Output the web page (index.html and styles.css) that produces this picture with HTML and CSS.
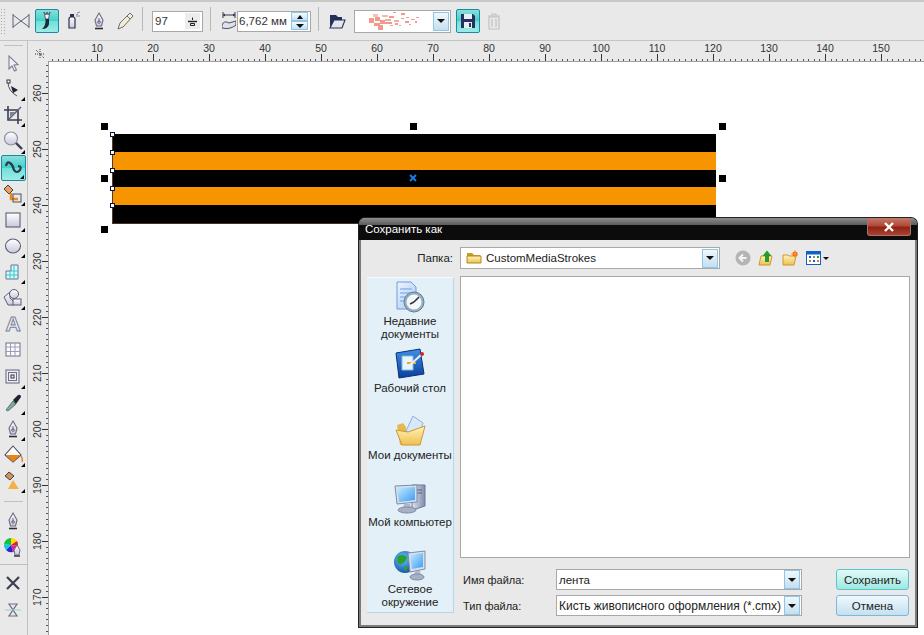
FILE: index.html
```html
<!DOCTYPE html>
<html lang="ru">
<head>
    <meta charset="UTF-8">
    <title>Сохранить как</title>
    <link rel="stylesheet" href="styles.css">
</head>
<body>
    <svg class="defs" width="0" height="0">
        <defs>
            <linearGradient id="glass" x1="0" y1="0" x2="0" y2="1"><stop offset="0" stop-color="#ffffff"/><stop offset="1" stop-color="#c8c8dc"/></linearGradient>
            <linearGradient id="folder" x1="0" y1="0" x2="0" y2="1"><stop offset="0" stop-color="#fff3b8"/><stop offset="1" stop-color="#f0c050"/></linearGradient>
            <linearGradient id="screen" x1="0" y1="0" x2="1" y2="1"><stop offset="0" stop-color="#c4ecff"/><stop offset="1" stop-color="#3c9cf0"/></linearGradient>
            <linearGradient id="case" x1="0" y1="0" x2="1" y2="0"><stop offset="0" stop-color="#dde4f0"/><stop offset="1" stop-color="#7f8ba8"/></linearGradient>
            <linearGradient id="desk" x1="0" y1="0" x2="0" y2="1"><stop offset="0" stop-color="#3f8fe8"/><stop offset="1" stop-color="#0a3f9c"/></linearGradient>
            <linearGradient id="page" x1="0" y1="0" x2="1" y2="1"><stop offset="0" stop-color="#eef5ff"/><stop offset="1" stop-color="#a8c8f4"/></linearGradient>
            <radialGradient id="globe" cx=".4" cy=".35" r=".7"><stop offset="0" stop-color="#6cc4f8"/><stop offset="1" stop-color="#0c4fa8"/></radialGradient>
            <symbol id="nib" viewBox="0 0 20 20">
                <path d="M10 2 L14 9 L12.5 15 H7.5 L6 9 Z" fill="url(#glass)" stroke="#6a6b82" stroke-width="1.1"/>
                <path d="M10 7 V11" stroke="#6a6b82"/>
                <circle cx="10" cy="11" r="1.3" fill="none" stroke="#6a6b82"/>
                <path d="M6 17.5 H14" stroke="#2c2c3c" stroke-width="1.6"/>
            </symbol>
            <symbol id="recent" viewBox="0 0 32 32">
                <path d="M3 1 H17 L22 6 V28 H3 Z" fill="url(#page)" stroke="#6f9ade"/>
                <path d="M6 8 H18 M6 12 H16 M6 16 H13 M6 20 H13" stroke="#6c9ce8"/>
                <circle cx="20" cy="21" r="10" fill="#94b0c2" stroke="#64808f"/>
                <circle cx="20" cy="21" r="7.5" fill="#f4f8fa"/>
                <path d="M20 21 L25 16 M20 21 L16 23" stroke="#30343c" stroke-width="1.6"/>
            </symbol>
        </defs>
    </svg>

    <div class="app">
        <header class="toolbar">
            <div class="grip"></div>
            <button class="tb-btn">
                <svg viewBox="0 0 18 18" class="ic18"><path d="M1 2 V16 M17 2 V16 M1 3 L17 15 M1 15 L17 3" fill="none" stroke="#5a6278"/></svg>
            </button>
            <button class="tb-btn active">
                <svg viewBox="0 0 20 20" class="ic20"><path d="M7 1 L8.5 8 H11.5 L13 1 L11 4 L10 1 L9 4 Z" fill="#f4f4f4" stroke="#3c4458" stroke-width=".8"/><path d="M8.5 8 H12 L12 13 Q11 18 5 18 Q9 15 8.5 8 Z" fill="#22283c"/></svg>
            </button>
            <button class="tb-btn">
                <svg viewBox="0 0 20 20" class="ic20"><path d="M6 8 Q6 6 8 6 H10 Q12 6 12 8 V17 H6 Z" fill="url(#glass)" stroke="#2e3148" stroke-width="1.2"/><rect x="7" y="3" width="4" height="3" fill="#2e3148"/><path d="M13 4 L15 3 M13 5 H17 M14 2 L17 1" stroke="#8c8ca8"/></svg>
            </button>
            <button class="tb-btn">
                <svg class="ic20"><use href="#nib"/></svg>
            </button>
            <button class="tb-btn">
                <svg viewBox="0 0 20 20" class="ic20"><path d="M15 2 L18 5 L8 16 L3 18 L5 12 Z" fill="#f2ecd8" stroke="#6c7064"/><path d="M12 5 L15 8" stroke="#6c7064"/></svg>
            </button>
            <div class="tb-sep"></div>
            <div class="field field-num">
                <span class="field-value">97</span>
                <span class="step-btn">
                    <svg viewBox="0 0 15 15" width="15" height="15"><path d="M3 7.5 H12" stroke="#222" stroke-width="1.4"/><path d="M7.5 3.5 V6 M5.5 9.5 H9.5 V11.5 H5.5 Z" fill="none" stroke="#222"/></svg>
                </span>
            </div>
            <div class="tb-sep sep-wide"></div>
            <svg viewBox="0 0 14 22" class="size-ic"><path d="M1 2 V8 M13 2 V8 M1 5 H13" stroke="#30344a"/><path d="M1 5 L3 3.5 V6.5 Z M13 5 L11 3.5 V6.5 Z" fill="#30344a"/><path d="M0 15 Q2 10 7 13 L14 11 V15 Q8 20 0 18 Z" fill="#dfe1e8" stroke="#4a4e60"/></svg>
            <div class="field field-size">
                <span class="field-value">6,762 мм</span>
                <span class="spin">
                    <span class="spin-part"><i class="arrow-up"></i></span>
                    <span class="spin-part"><i class="arrow-down"></i></span>
                </span>
            </div>
            <div class="tb-sep sep-tight"></div>
            <button class="tb-btn btn-folder">
                <svg viewBox="0 0 20 20" class="ic20"><path d="M3 16 V4 H9 L11 6 H15 V9 H8 Z" fill="#27305a"/><path d="M3 17 L7 9 H18 L15 17 Z" fill="#e4e6ee" stroke="#27305a" stroke-width="1.1"/></svg>
            </button>
            <div class="field field-brush">
                <svg viewBox="0 0 52 18" class="splatter">
                    <g fill="#ee8070">
                        <rect x="0" y="6" width="5" height="5"/><rect x="4" y="2" width="5" height="3" opacity=".6"/><rect x="6" y="5" width="5" height="4"/>
                        <rect x="5" y="11" width="6" height="3"/><rect x="9" y="13" width="5" height="5"/><rect x="11" y="8" width="5" height="4"/>
                        <rect x="13" y="3" width="6" height="2" opacity=".7"/><rect x="16" y="7" width="6" height="2" opacity=".8"/><rect x="16" y="10" width="7" height="2"/>
                        <rect x="20" y="4" width="5" height="2"/><rect x="24" y="0" width="3" height="1"/><rect x="25" y="8" width="5" height="2" opacity=".8"/>
                        <rect x="26" y="11" width="3" height="2"/><rect x="32" y="1" width="4" height="2"/><rect x="32" y="6" width="3" height="1"/>
                        <rect x="36" y="9" width="4" height="2"/><rect x="37" y="5" width="3" height="1"/><rect x="42" y="7" width="4" height="1"/>
                        <rect x="40" y="12" width="2" height="1"/><rect x="46" y="9" width="2" height="2"/><rect x="47" y="5" width="3" height="1"/>
                        <rect x="30" y="13" width="2" height="1"/><rect x="21" y="13" width="3" height="1"/>
                    </g>
                </svg>
                <span class="drop-btn"><i class="arrow-down"></i></span>
            </div>
            <button class="tb-btn active btn-save">
                <svg viewBox="0 0 20 20" class="ic20"><path d="M3 3 H15 L17 5 V17 H3 Z" fill="#2a2f62"/><rect x="6" y="3" width="8" height="5" fill="#e8ecf4"/><rect x="6" y="11" width="8" height="6" fill="#e8ecf4"/><rect x="11" y="12" width="2" height="4" fill="#2a2f62"/></svg>
            </button>
            <button class="tb-btn">
                <svg viewBox="0 0 20 20" class="ic20"><path d="M4 5 H16 M8 5 V3 H12 V5" fill="none" stroke="#c2c2c2" stroke-width="1.2"/><path d="M5 6 H15 V18 H5 Z M8 8 V16 M12 8 V16" fill="none" stroke="#c2c2c2" stroke-width="1.2"/></svg>
            </button>
        </header>

        <div class="workspace">
            <nav class="toolbox">
                <div class="box-sep first"></div>
                <div class="tool">
                    <svg viewBox="0 0 20 20" class="ic20"><path d="M6 3 L6 16 L9 13 L11.5 18 L13.5 17 L11 12 L15 11.5 Z" fill="#f0f0f6" stroke="#7a7f98" stroke-width="1.1"/></svg>
                </div>
                <div class="tool more">
                    <svg viewBox="0 0 20 20" class="ic20"><path d="M5 3 Q5 12 14 17" fill="none" stroke="#555"/><rect x="4" y="1" width="3" height="3" fill="#fff" stroke="#333"/><path d="M8 7 L15 11 L10 14 Z" fill="#1c2236"/></svg>
                </div>
                <div class="tool more">
                    <svg viewBox="0 0 20 20" class="ic20"><path d="M5 1 V15 H19 M1 5 H15 V19" fill="none" stroke="#3a3e54" stroke-width="1.6"/><path d="M6 14 L18 2" stroke="#5c6074" stroke-width="1.4"/><path d="M7 7 H12 L7 12 Z" fill="#7c8094"/></svg>
                </div>
                <div class="tool more">
                    <svg viewBox="0 0 20 20" class="ic20"><circle cx="8" cy="7.5" r="6.5" fill="url(#glass)" stroke="#8a8fa4" stroke-width="1.2"/><path d="M13 12 L19 18" stroke="#3a3e50" stroke-width="2.4"/></svg>
                </div>
                <div class="tool more active">
                    <svg viewBox="0 0 20 20" class="ic20"><path d="M2 8 Q3 3 6 5 T10 12 Q13 16 16 12 Q18 8 14 8" fill="none" stroke="#2c3a4e" stroke-width="2.2"/></svg>
                </div>
                <div class="tool more">
                    <svg viewBox="0 0 20 20" class="ic20"><path d="M5 1 L10 6 L6 10 L1 5 Z" fill="#e8a060" stroke="#3c4058"/><path d="M8 9 V15 H15" fill="none" stroke="#f08a10" stroke-width="2.6"/><rect x="10" y="10" width="8" height="8" fill="none" stroke="#4a4e66"/></svg>
                </div>
                <div class="tool more">
                    <svg viewBox="0 0 20 20" class="ic20"><rect x="3" y="3" width="14" height="14" fill="url(#glass)" stroke="#5a5e76" stroke-width="1.1"/></svg>
                </div>
                <div class="tool more">
                    <svg viewBox="0 0 20 20" class="ic20"><ellipse cx="10" cy="10" rx="7.5" ry="7" fill="url(#glass)" stroke="#5a5e76" stroke-width="1.1"/></svg>
                </div>
                <div class="tool more">
                    <svg viewBox="0 0 20 20" class="ic20"><path d="M3 9 H8 V3 H15 V17 H3 Z" fill="#d8fafa" stroke="#6c708c"/><path d="M3 13 H15 M8 9 H15 M7 9 V17 M11 3 V17" stroke="#30c8d0"/></svg>
                </div>
                <div class="tool more">
                    <svg viewBox="0 0 20 20" class="ic20"><path d="M1 9 L7 4 L7 10 L11 14 V17 H5 Z" fill="url(#glass)" stroke="#5a5e76"/><circle cx="11" cy="6" r="4.5" fill="url(#glass)" stroke="#5a5e76"/><rect x="10" y="11" width="8" height="6" fill="url(#glass)" stroke="#5a5e76"/></svg>
                </div>
                <div class="tool"><span class="text-tool">A</span></div>
                <div class="tool">
                    <svg viewBox="0 0 20 20" class="ic20"><rect x="3" y="3" width="14" height="13" fill="#fbfbfd" stroke="#6c708c"/><path d="M3 7 H17 M3 11.5 H17 M7.5 3 V16 M12 3 V16" stroke="#9a9eb4"/></svg>
                </div>
                <div class="tool more">
                    <svg viewBox="0 0 20 20" class="ic20"><rect x="3" y="3" width="13" height="13" fill="#eee" stroke="#6c708c" stroke-width="1.1"/><rect x="5.5" y="5.5" width="8" height="8" fill="none" stroke="#6c708c"/><rect x="8" y="8" width="3" height="3" fill="none" stroke="#30344a"/></svg>
                </div>
                <div class="tool more">
                    <svg viewBox="0 0 20 20" class="ic20"><path d="M3 17 L10 8 L13 11 L5 18 Z" fill="#7fa89c" stroke="#5a7a74"/><path d="M10 7 L15 2 Q18 1 18 4 L13 11 Z" fill="#1f2336"/></svg>
                </div>
                <div class="tool more"><svg class="ic20"><use href="#nib"/></svg></div>
                <div class="tool more">
                    <svg viewBox="0 0 20 20" class="ic20"><path d="M10 1 L18 10 L10 17 L2 10 Z" fill="#fff" stroke="#4a4e66" stroke-width="1.1"/><path d="M3 10 H17 L10 17 Z" fill="#ee8412"/><path d="M18 11 Q20 14 19 17" fill="none" stroke="#ee8412" stroke-width="1.4"/></svg>
                </div>
                <div class="tool more">
                    <svg viewBox="0 0 20 20" class="ic20"><path d="M6 1 L11 5 L7 9 L2 5 Z" fill="#d89050" stroke="#3c4058"/><path d="M10 9 L16 18 H5 Z" fill="#f6b048"/></svg>
                </div>
                <div class="box-sep after-tools"></div>
                <div class="tool"><svg class="ic20"><use href="#nib"/></svg></div>
                <div class="tool">
                    <svg viewBox="0 0 20 20" class="ic20">
                        <path d="M8 8 L8 1 A7 7 0 0 1 14 4 Z" fill="#ffd800"/><path d="M8 8 L14 4 A7 7 0 0 1 15 9 Z" fill="#e02020"/><path d="M8 8 L15 9 A7 7 0 0 1 10 15 Z" fill="#e020a0"/>
                        <path d="M8 8 L10 15 A7 7 0 0 1 3 13 Z" fill="#3020d0"/><path d="M8 8 L3 13 A7 7 0 0 1 1 7 Z" fill="#10c8e0"/><path d="M8 8 L1 7 A7 7 0 0 1 8 1 Z" fill="#10c040"/>
                        <path d="M14 8 L17 13 L16 18 H12 L11 13 Z" fill="url(#glass)" stroke="#6a6b82"/><path d="M11 19 H17" stroke="#2c2c3c" stroke-width="1.4"/>
                    </svg>
                </div>
                <div class="box-sep after-color"></div>
                <div class="tool">
                    <svg viewBox="0 0 20 20" class="ic20"><path d="M4 4 L16 16 M16 4 L4 16" stroke="#3c3f50" stroke-width="2.2"/></svg>
                </div>
                <div class="tool">
                    <svg viewBox="0 0 20 20" class="ic20"><path d="M6 4 H14 L6 16 H14 Z" fill="none" stroke="#6a6e84" stroke-width="1.2"/><path d="M2 10 H18" stroke="#9cd0c4"/></svg>
                </div>
                <div class="box-end"></div>
            </nav>

            <main class="canvas-area">
                <div class="ruler-corner">
                    <svg viewBox="0 0 12 12" width="12" height="12"><path d="M1 6 H11 M6 1 V11 M2 2 L10 10" stroke="#333" stroke-dasharray="1 1"/></svg>
                </div>
                <div class="ruler-h">
                    <span>10</span><span>20</span><span>30</span><span>40</span><span>50</span><span>60</span><span>70</span><span>80</span>
                    <span>90</span><span>100</span><span>110</span><span>120</span><span>130</span><span>140</span><span>150</span>
                </div>
                <div class="ruler-v">
                    <span>260</span><span>250</span><span>240</span><span>230</span><span>220</span>
                    <span>210</span><span>200</span><span>190</span><span>180</span><span>170</span>
                </div>
                <div class="sheet">
                    <div class="ribbon">
                        <div class="stripe black"></div>
                        <div class="stripe orange"></div>
                        <div class="stripe black"></div>
                        <div class="stripe orange"></div>
                        <div class="stripe black"></div>
                    </div>
                    <i class="node n1"></i><i class="node n2"></i><i class="node n3"></i><i class="node n4"></i><i class="node n5"></i>
                    <i class="handle h-tl"></i><i class="handle h-tc"></i><i class="handle h-tr"></i>
                    <i class="handle h-ml"></i><i class="handle h-mr"></i><i class="handle h-bl"></i>
                    <svg class="center-mark" viewBox="0 0 8 8" width="8" height="8"><path d="M1 1 L7 7 M7 1 L1 7" stroke="#1a7ee8" stroke-width="1.8"/></svg>
                </div>
            </main>
        </div>
    </div>

    <section class="dialog">
        <div class="dialog-title">
            <span>Сохранить как</span>
            <button class="close-btn">
                <svg viewBox="0 0 12 10" width="12" height="10"><path d="M2 1 L10 9 M10 1 L2 9" stroke="#fff" stroke-width="2.4"/></svg>
            </button>
        </div>
        <div class="dialog-body">
            <div class="folder-row">
                <label class="folder-label">Папка:</label>
                <div class="combo combo-folder">
                    <svg viewBox="0 0 16 16" width="16" height="16" class="folder-ic"><path d="M1 13 V3 H6 L8 5 H14 V13 Z" fill="#c89c28"/><path d="M1 13 V6 H15 V13 Z" fill="url(#folder)" stroke="#b08a20"/></svg>
                    <span class="combo-text">CustomMediaStrokes</span>
                    <span class="drop-btn"><i class="arrow-down"></i></span>
                </div>
                <div class="nav-icons">
                    <svg viewBox="0 0 16 16" width="16" height="16"><circle cx="8" cy="8" r="7.5" fill="#b4b4b4"/><path d="M11.5 8 H5 M8 4.5 L4.5 8 L8 11.5" fill="none" stroke="#f4f4f4" stroke-width="2"/></svg>
                    <svg viewBox="0 0 16 16" width="16" height="16"><path d="M1 15 L3 6 H14 L12 15 Z" fill="url(#folder)" stroke="#c89a30"/><path d="M7 12 V6 H4.5 L9 0.5 L13.5 6 H11 V12 Z" fill="#2a9a2a"/></svg>
                    <svg viewBox="0 0 16 16" width="16" height="16"><path d="M1 15 V5 H6 L7 6 H14 L12 15 Z" fill="url(#folder)" stroke="#c89a30"/><circle cx="13" cy="4" r="2.6" fill="#f05a20"/><path d="M13 0 V8 M9 4 H16" stroke="#f8a020"/></svg>
                    <span class="view-btn">
                        <svg viewBox="0 0 15 14" width="15" height="14"><rect x=".5" y=".5" width="14" height="13" fill="#fff" stroke="#1060c8"/><rect x="1" y="1" width="13" height="2.5" fill="#1060c8"/><rect x="3" y="5" width="2" height="2" fill="#1060c8"/><rect x="7" y="5" width="2" height="2" fill="#888"/><rect x="11" y="5" width="2" height="2" fill="#2a9a2a"/><rect x="3" y="9" width="2" height="2" fill="#e87818"/><rect x="7" y="9" width="2" height="2" fill="#1060c8"/><rect x="11" y="9" width="2" height="2" fill="#e87818"/></svg>
                        <i class="arrow-down small"></i>
                    </span>
                </div>
            </div>
            <div class="dialog-content">
                <aside class="places">
                    <div class="place">
                        <svg class="place-ic"><use href="#recent"/></svg>
                        <span>Недавние<br>документы</span>
                    </div>
                    <div class="place">
                        <svg viewBox="0 0 32 32" class="place-ic"><path d="M2 5 L26 1 L30 26 L5 30 Z" fill="url(#desk)" stroke="#0a2f78"/><path d="M8 8 H19 V22 H8 Z" fill="#e8f4fc" stroke="#88b8e0"/><path d="M13 15 H22" stroke="#e8a838" stroke-width="2"/><path d="M16 17 L28 6" stroke="#e8f0f8" stroke-width="2"/><circle cx="28" cy="6" r="2" fill="#d02020"/></svg>
                        <span>Рабочий стол</span>
                    </div>
                    <div class="place">
                        <svg viewBox="0 0 32 32" class="place-ic"><path d="M3 10 L9 8 L12 12 V30 H6 Z" fill="#e8b850"/><path d="M12 16 L19 1 L29 8 L24 22 Z" fill="#d8e8fa" stroke="#8cb0dc"/><path d="M2 15 L14 17 L31 11 L26 30 L8 30 Z" fill="url(#folder)" stroke="#c89a30"/></svg>
                        <span>Мои документы</span>
                    </div>
                    <div class="place">
                        <svg viewBox="0 0 32 32" class="place-ic"><path d="M18 3 H31 V24 L22 27 H18 Z" fill="url(#case)" stroke="#6c7896"/><path d="M22 8 H28 M22 11 H28" stroke="#59627c"/><path d="M1 4 L23 3 V20 L3 22 Z" fill="#d8dfec" stroke="#7f8ba8"/><path d="M3 6 L21 5 V18 L5 20 Z" fill="url(#screen)"/><path d="M10 22 H16 L17 26 H9 Z" fill="#b0b8cc"/><ellipse cx="13" cy="28" rx="9" ry="3" fill="#a8b0c4" stroke="#7f8ba8"/></svg>
                        <span>Мой компьютер</span>
                    </div>
                    <div class="place">
                        <svg viewBox="0 0 32 32" class="place-ic"><circle cx="11" cy="13" r="11" fill="url(#globe)"/><path d="M4 7 Q11 4 13 9 Q10 16 5 15 Q2 11 4 7 Z M9 18 L14 18 L12 23 Z" fill="#2ca02c"/><path d="M14 4 L31 2 V20 L16 23 Z" fill="#d8dfec" stroke="#7f8ba8"/><path d="M16 6 L29 4 V18 L18 20 Z" fill="url(#screen)"/><path d="M21 22 H26 L27 26 H20 Z" fill="#b0b8cc"/><ellipse cx="23" cy="28" rx="7" ry="3" fill="#a8b0c4" stroke="#7f8ba8"/></svg>
                        <span>Сетевое<br>окружение</span>
                    </div>
                </aside>
                <div class="main-pane">
                    <div class="file-list"></div>
                    <div class="file-form">
                        <label>Имя файла:</label>
                        <div class="combo"><span class="combo-text">лента</span><span class="drop-btn"><i class="arrow-down"></i></span></div>
                        <button class="dlg-btn primary">Сохранить</button>
                        <label>Тип файла:</label>
                        <div class="combo"><span class="combo-text type-text">Кисть живописного оформления (*.cmx)</span><span class="drop-btn"><i class="arrow-down"></i></span></div>
                        <button class="dlg-btn">Отмена</button>
                    </div>
                </div>
            </div>
        </div>
    </section>
</body>
</html>
```

FILE: styles.css
```css
* {
    box-sizing: border-box;
}

body {
    margin: 0;
    width: 924px;
    height: 635px;
    overflow: hidden;
    position: relative;
    font-family: "Liberation Sans", sans-serif;
    font-size: 11.5px;
    color: #222;
    background: #e9e9e9;
}

button {
    font: inherit;
    padding: 0;
    border: none;
    background: none;
    color: inherit;
}

i {
    display: block;
}

svg {
    display: block;
}

.defs {
    height: 0;
}

.ic18 {
    width: 18px;
    height: 18px;
}

.ic20 {
    width: 20px;
    height: 20px;
}

.app {
    height: 635px;
    display: flex;
    flex-direction: column;
}

/* top property bar */
.toolbar {
    height: 41px;
    flex: none;
    display: flex;
    align-items: center;
    border-top: 2px solid #c8c8c8;
    border-bottom: 1px solid #c4c4c4;
}

.grip {
    width: 5px;
    height: 26px;
    margin-right: 4px;
    background: radial-gradient(circle, #aaa 0 1px, transparent 1px) 0 0 / 3px 3px;
}

.tb-btn {
    width: 24px;
    height: 24px;
    margin-right: 2px;
    flex: none;
    display: flex;
    align-items: center;
    justify-content: center;
}

.active {
    background: linear-gradient(#86e0dc, #45d0c8 48%, #6ee2da 52%, #9cece6);
    border: 1px solid #1c88a4;
    border-radius: 2px;
}

.tb-sep {
    width: 1px;
    height: 24px;
    margin: -4px 9px 0 3px;
    background: #b8b8b8;
    flex: none;
}

.sep-wide {
    margin: -4px 11px 0 7px;
}

.sep-tight {
    margin: -4px 6px 0 7px;
}

.field {
    height: 21px;
    background: #fff;
    border: 1px solid #a8a8a8;
    display: flex;
    align-items: center;
    flex: none;
}

.field-value {
    flex: 1;
    padding-left: 2px;
    font-size: 11.5px;
    color: #333;
}

.field-num {
    width: 51px;
    padding-right: 2px;
}

.step-btn {
    width: 15px;
    height: 16px;
    background: #ececec;
    display: flex;
    align-items: center;
    justify-content: center;
}

.size-ic {
    width: 14px;
    height: 22px;
    margin-right: 1px;
    flex: none;
}

.field-size {
    width: 74px;
    padding-right: 2px;
}

.field-size .field-value {
    padding-left: 1px;
    white-space: nowrap;
}

.spin {
    width: 17px;
    height: 18px;
    display: flex;
    flex-direction: column;
}

.spin-part {
    flex: 1;
    border: 1px solid #8fc6e6;
    background: linear-gradient(#f4fafd, #c6e0f2);
    display: flex;
    align-items: center;
    justify-content: center;
}

.arrow-up {
    border: 3px solid transparent;
    border-top: 0;
    border-bottom: 4px solid #111;
}

.arrow-down {
    border: 4px solid transparent;
    border-bottom: 0;
    border-top: 4px solid #111;
}

.arrow-down.small {
    border-width: 3px 3px 0;
    margin-left: 2px;
}

.btn-folder {
    margin-right: 5px;
}

.field-brush {
    width: 97px;
    height: 23px;
    margin-right: 5px;
    padding-left: 14px;
    justify-content: space-between;
}

.splatter {
    width: 52px;
    height: 18px;
    opacity: .8;
}

.drop-btn {
    width: 16px;
    height: 19px;
    margin-right: 1px;
    flex: none;
    border: 1px solid #8fc6e6;
    background: linear-gradient(#f0f8fc, #c4dff0);
    display: flex;
    align-items: center;
    justify-content: center;
}

.btn-save {
    margin-right: 2px;
}

/* toolbox and canvas */
.workspace {
    flex: 1;
    display: flex;
    min-height: 0;
}

.toolbox {
    width: 28px;
    flex: none;
    border-right: 1px solid #c0c0c0;
    overflow: hidden;
}

.box-sep {
    height: 1px;
    background: #c0c0c0;
    margin: 0 4px;
}

.box-sep.first {
    margin: 4px 4px 4px;
}

.box-sep.after-tools {
    margin: 7px 4px 6px;
}

.box-sep.after-color {
    margin: 4px 0 5px;
}

.box-end {
    height: 2px;
    margin: 12px 4px 0;
    background: #333;
}

.tool {
    width: 26px;
    height: 26.13px;
    position: relative;
    display: flex;
    align-items: center;
    justify-content: center;
}

.tool.active {
    width: 25px;
    margin-left: 1px;
}

.tool.more::after {
    content: "";
    position: absolute;
    right: 1px;
    bottom: 1px;
    border: 2.5px solid transparent;
    border-right-color: #000;
    border-bottom-color: #000;
}

.text-tool {
    font-weight: bold;
    font-size: 21px;
    line-height: 22px;
    color: #f2f2f8;
    -webkit-text-stroke: 1px #7a7f98;
}

.canvas-area {
    flex: 1;
    display: grid;
    grid-template-columns: 20px 1fr;
    grid-template-rows: 20px 1fr;
    min-width: 0;
}

.ruler-corner {
    display: flex;
    align-items: flex-end;
    justify-content: center;
    padding: 0 0 1px 3px;
}

.ruler-h {
    display: flex;
    padding-left: 21px;
    overflow: hidden;
    background:
        repeating-linear-gradient(90deg, #333 0 1px, transparent 1px 56px) 49px 100% / 56px 7px repeat-x,
        repeating-linear-gradient(90deg, #555 0 1px, transparent 1px 5.6px) 49px 100% / 56px 2px repeat-x;
}

.ruler-h span {
    flex: 0 0 56px;
    text-align: center;
    font-size: 10.5px;
    line-height: 12px;
    padding-top: 1px;
    color: #333;
}

.ruler-v {
    padding-top: 4px;
    overflow: hidden;
    background:
        repeating-linear-gradient(180deg, #333 0 1px, transparent 1px 56px) 100% 32px / 6px 56px repeat-y,
        repeating-linear-gradient(180deg, #555 0 1px, transparent 1px 5.6px) 100% 32px / 2px 56px repeat-y;
}

.ruler-v span {
    display: flex;
    height: 56px;
    width: 16px;
    margin-left: 1px;
    align-items: center;
    justify-content: center;
    writing-mode: vertical-rl;
    transform: rotate(180deg);
    font-size: 10.5px;
    line-height: 12px;
    color: #333;
}

.sheet {
    position: relative;
    background: #fff;
    border-top: 1px solid #a0a0a0;
    border-left: 1px solid #a0a0a0;
    overflow: hidden;
}

.ribbon {
    position: absolute;
    left: 63px;
    top: 72px;
    width: 604px;
    height: 90px;
    display: flex;
    flex-direction: column;
    border-left: 1px solid #5a3a20;
    border-bottom: 1px solid #4a3020;
}

.stripe {
    flex: 1;
}

.black {
    background: #000;
}

.orange {
    background: #f79500;
}

.node {
    position: absolute;
    left: 61px;
    width: 5px;
    height: 5px;
    background: #fff;
    border: 1px solid #113;
}

.n1 { top: 70px; }
.n2 { top: 88px; }
.n3 { top: 106px; }
.n4 { top: 124px; }
.n5 { top: 141px; }

.handle {
    position: absolute;
    width: 7px;
    height: 7px;
    background: #000;
}

.h-tl { left: 52px; top: 61px; }
.h-tc { left: 361px; top: 61px; }
.h-tr { left: 670px; top: 61px; }
.h-ml { left: 52px; top: 113px; }
.h-mr { left: 670px; top: 113px; }
.h-bl { left: 52px; top: 164px; }

.center-mark {
    position: absolute;
    left: 360px;
    top: 112px;
}

/* save dialog */
.dialog {
    position: absolute;
    left: 359px;
    top: 218px;
    width: 558px;
    height: 409px;
    border: 2px solid #7b7b7b;
    border-top: 0;
    border-radius: 6px 6px 0 0;
    box-shadow: 0 0 0 1px #222;
    background: #e9e9e9;
}

.dialog-title {
    height: 22px;
    margin: 0 -2px;
    padding: 3px 6px 0 6px;
    display: flex;
    justify-content: space-between;
    border-radius: 6px 6px 0 0;
    background: linear-gradient(#8c8c8c, #5c5c5c 7px, #0c0c0c 7px);
    color: #fff;
    font-size: 11.5px;
    line-height: 17px;
}

.close-btn {
    width: 44px;
    height: 18px;
    margin-top: -3px;
    border: 1px solid #a07870;
    border-top: 0;
    border-radius: 0 0 3px 3px;
    background: linear-gradient(#c47a6c, #b04a38 45%, #8e2414 55%, #b04030);
    display: flex;
    align-items: center;
    justify-content: center;
}

.dialog-body {
    padding: 7px 5px 0 6px;
    display: flex;
    flex-direction: column;
}

.folder-row {
    display: flex;
    align-items: center;
    height: 22px;
}

.folder-label {
    width: 87px;
    padding-right: 1px;
    text-align: right;
    margin-right: 6px;
}

.combo {
    height: 22px;
    background: #fff;
    border: 1px solid #a8a8a8;
    display: flex;
    align-items: center;
}

.combo-folder {
    width: 260px;
    padding-left: 5px;
}

.folder-ic {
    margin-right: 2px;
    flex: none;
}

.combo-text {
    flex: 1;
    padding-left: 2px;
    white-space: nowrap;
    overflow: hidden;
}

.type-text {
    font-size: 12px;
}

.nav-icons {
    display: flex;
    align-items: center;
    gap: 7px;
    margin-left: 15px;
}

.nav-icons svg:nth-child(3) {
    margin-left: 1px;
}

.view-btn {
    display: flex;
    align-items: center;
    margin-left: 1px;
}

.dialog-content {
    display: flex;
    gap: 6px;
    margin-top: 7px;
}

.places {
    width: 87px;
    height: 336px;
    margin-top: 1px;
    padding-top: 3px;
    background: #e4f0f8;
    border-right: 1px solid #b4d8ee;
    border-bottom: 1px solid #b4d8ee;
    border-top: 1px solid #f6fafc;
    overflow: hidden;
}

.place {
    height: 67px;
    display: flex;
    flex-direction: column;
    align-items: center;
    text-align: center;
    line-height: 13px;
}

.place-ic {
    width: 32px;
    height: 32px;
    margin-bottom: 2px;
    flex: none;
}

.main-pane {
    width: 450px;
}

.file-list {
    height: 282px;
    background: #fff;
    border: 1px solid #a8a8a8;
}

.file-form {
    margin-top: 11px;
    display: grid;
    grid-template-columns: 93px 246px 107px;
    grid-template-rows: 21px 21px;
    row-gap: 5px;
    padding-left: 3px;
    align-items: center;
}

.file-form label {
    font-size: 11px;
}

.file-form .combo {
    height: 21px;
}

.dlg-btn {
    width: 73px;
    height: 21px;
    margin-left: 34px;
    border: 1px solid #7db8d8;
    border-radius: 3px;
    background: linear-gradient(#f0f8fc, #c4e0f2);
    text-align: center;
}

.dlg-btn.primary {
    background: linear-gradient(#e4faf8, #9ee8e2);
    border-color: #5cc4cc;
}
```
